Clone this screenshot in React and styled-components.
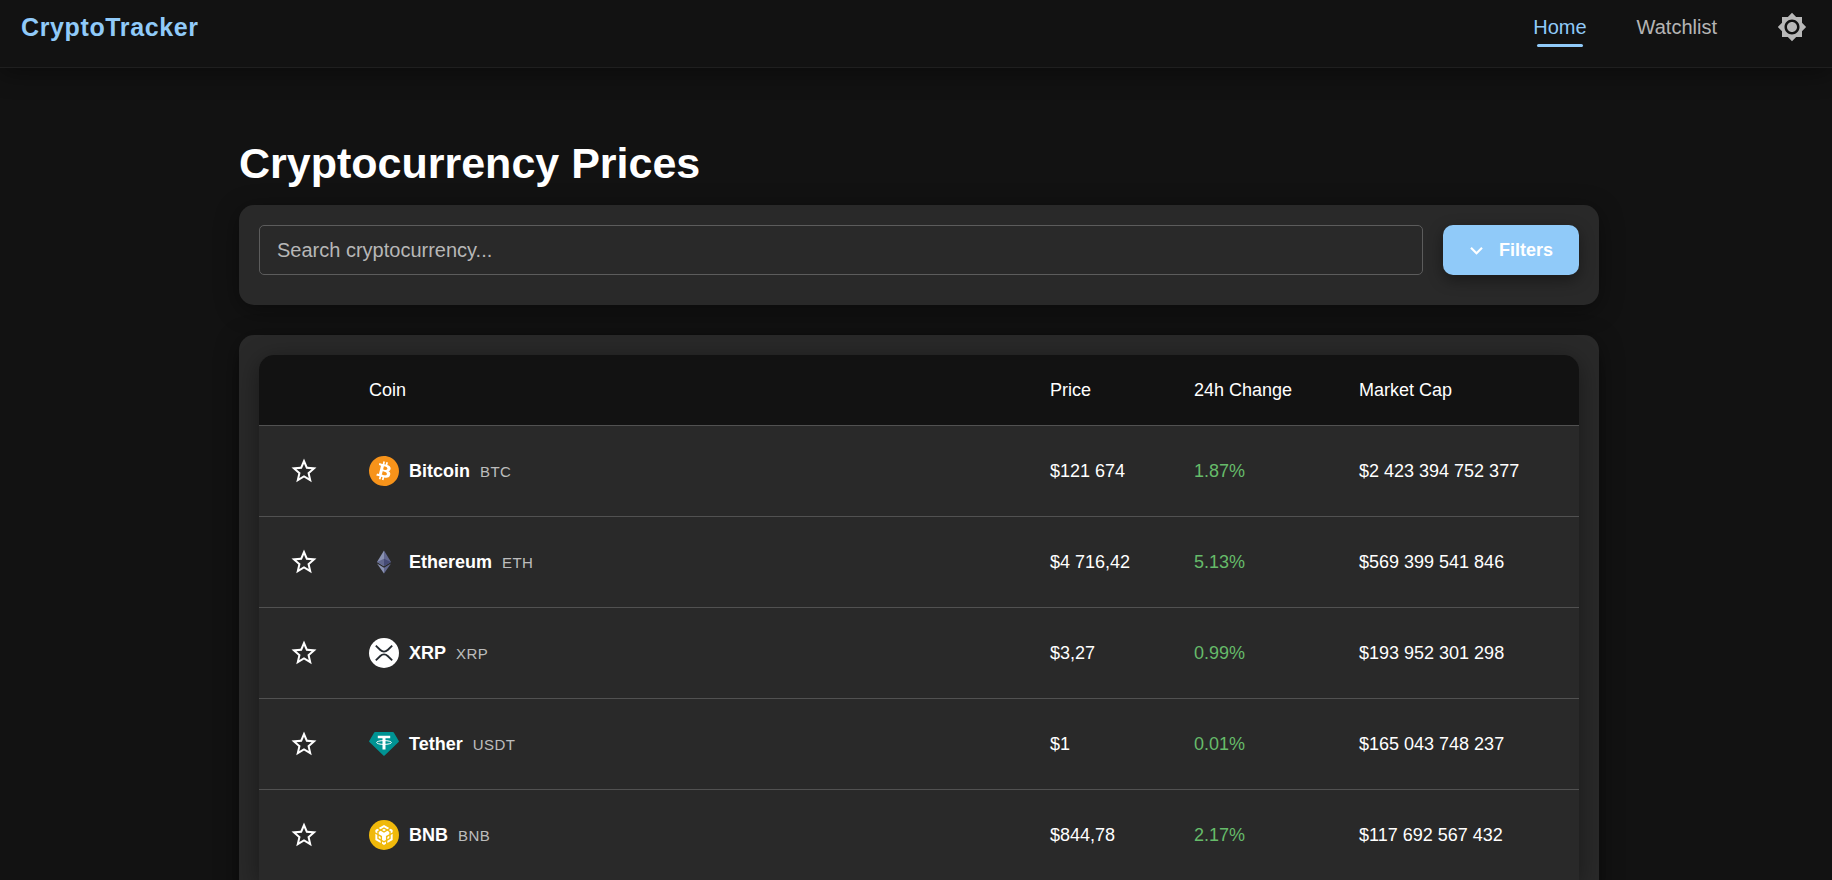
import React, { useState } from "react";
import styled, { createGlobalStyle } from "styled-components";
import { MdStarBorder, MdStar, MdBrightness7, MdExpandMore } from "react-icons/md";
import { SiBitcoin, SiBnbchain } from "react-icons/si";

const GlobalStyle = createGlobalStyle`
  *, *::before, *::after { box-sizing: border-box; }
  body {
    margin: 0;
    background: #121212;
    color: #fff;
    font-family: "Liberation Sans", Arial, sans-serif;
    font-size: 18px;
  }
  button, input { font: inherit; color: inherit; }
`;

const Header = styled.header`
  position: relative;
  display: flex;
  align-items: center;
  justify-content: space-between;
  padding: 2px 15px 15px 21px;
  border-bottom: 1px solid #1f1f1f;
  box-shadow: 0 5px 25px rgba(0, 0, 0, 0.4);
`;

const Logo = styled.a`
  color: #90caf9;
  font-size: 25px;
  font-weight: 700;
  line-height: 40px;
  letter-spacing: 0.025em;
  text-decoration: none;
`;

const Nav = styled.nav`
  display: flex;
  align-items: center;
  gap: 50px;
`;

const NavLink = styled.a`
  position: relative;
  color: ${(p) => (p.$active ? "#90caf9" : "rgba(255, 255, 255, 0.7)")};
  font-size: 20px;
  line-height: 40px;
  text-decoration: none;

  &::after {
    content: "";
    display: ${(p) => (p.$active ? "block" : "none")};
    position: absolute;
    left: 4px;
    right: 4px;
    bottom: 0;
    height: 3px;
    border-radius: 2px;
    background: #90caf9;
  }
`;

const IconButton = styled.button`
  display: inline-flex;
  padding: 10px;
  border: 0;
  border-radius: 50%;
  background: none;
  color: ${(p) => (p.$muted ? "rgba(255, 255, 255, 0.7)" : "#fff")};
  cursor: pointer;

  svg { width: 30px; height: 30px; }
`;

const Main = styled.main`
  max-width: 1366px;
  margin: 0 auto;
  padding: 68px 0 30px 6px;
`;

const Title = styled.h1`
  margin: 0 0 15px;
  font-size: 43px;
  line-height: 54px;
  font-weight: 700;
`;

const Panel = styled.section`
  margin-bottom: 30px;
  padding: 20px 20px 30px;
  border-radius: 15px;
  background: #292929;
  box-shadow: 0 5px 25px rgba(0, 0, 0, 0.4);
`;

const SearchRow = styled.form`
  display: flex;
  gap: 20px;
`;

const SearchInput = styled.input`
  flex: 1;
  min-width: 0;
  height: 50px;
  padding: 0 17px;
  border: 1px solid #5c5c5c;
  border-radius: 5px;
  outline: 0;
  background: transparent;
  font-size: 20px;

  &::placeholder { color: #b7b7b7; opacity: 1; }
  &:focus { border-color: #90caf9; }
`;

const FilterButton = styled.button`
  display: flex;
  align-items: center;
  justify-content: center;
  gap: 10px;
  width: 136px;
  height: 50px;
  padding: 0 5px 0 0;
  border: 0;
  border-radius: 10px;
  background: #90caf9;
  color: #fff;
  font-weight: 700;
  box-shadow: 0 5px 15px rgba(0, 0, 0, 0.4);
  cursor: pointer;

  svg { width: 25px; height: 25px; }
`;

const TableFrame = styled.div`
  overflow: hidden;
  border-radius: 15px 15px 0 0;
  box-shadow: 0 5px 25px rgba(0, 0, 0, 0.4);
`;

const CoinTable = styled.table`
  width: 100%;
  border-collapse: separate;
  border-spacing: 0;
  table-layout: fixed;
  background: #292929;
`;

const Column = styled.col`
  width: ${(p) => p.$width || "auto"};
`;

const HeadCell = styled.th`
  height: 71px;
  padding: 0 20px;
  border-bottom: 1px solid #515151;
  background: #121212;
  font-weight: 400;
  text-align: left;
`;

const Cell = styled.td`
  height: 91px;
  padding: 0 20px;
  border-bottom: 1px solid #515151;
  color: ${(p) => (p.$gain ? "#66bb6a" : "#fff")};
`;

const CoinLabel = styled.div`
  display: flex;
  align-items: center;
  gap: 10px;

  > svg { flex: none; width: 30px; height: 30px; }
`;

const CoinName = styled.strong`
  font-size: 18px;
`;

const CoinSymbol = styled.span`
  color: rgba(255, 255, 255, 0.7);
  font-size: 15px;
  letter-spacing: 0.03em;
`;

const BitcoinIcon = () => (
  <svg viewBox="0 0 30 30" aria-hidden="true">
    <circle cx="15" cy="15" r="14" fill="#fff" />
    <SiBitcoin size={30} color="#f7931a" />
  </svg>
);

const EthereumIcon = () => (
  <svg viewBox="0 0 30 30" aria-hidden="true">
    <path d="M15 3.5 8 15l7 4.200z" fill="#8a92b2" />
    <path d="M15 3.5 22 15l-7 4.200z" fill="#62688f" />
    <path d="M15 11.800 8 15l7 4.200z" fill="#62688f" />
    <path d="M15 11.800 22 15l-7 4.200z" fill="#454a75" />
    <path d="M8 16.600 15 26.500v-5.800z" fill="#8a92b2" />
    <path d="M22 16.600 15 26.500v-5.800z" fill="#62688f" />
  </svg>
);

const XrpIcon = () => (
  <svg viewBox="0 0 30 30" aria-hidden="true">
    <circle cx="15" cy="15" r="15" fill="#fff" />
    <g fill="none" stroke="#23292f" strokeWidth="1.8">
      <path d="M6.800 7.600 11.300 12a5.300 5.300 0 0 0 7.400 0l4.500-4.400" />
      <path d="M6.800 22.400 11.300 18a5.300 5.300 0 0 1 7.400 0l4.500 4.400" />
    </g>
  </svg>
);

const TetherIcon = () => (
  <svg viewBox="0 0 30 30" aria-hidden="true">
    <path d="M6.300 3h17.400c.5 0 .9.200 1.100.6l5 8.300c.2.400.2.900-.2 1.200L15.600 26.600c-.4.300-.8.300-1.200 0L.4 13.100c-.4-.3-.4-.8-.2-1.200l5-8.300c.2-.4.600-.6 1.100-.6z" fill="#009393" />
    <path d="M8.800 6.800h12.400v2.400H8.800zM13.500 9h3v11.400h-3z" fill="#fff" />
    <ellipse cx="15" cy="13.500" rx="7.400" ry="1.900" fill="none" stroke="#fff" strokeWidth="1" />
  </svg>
);

const BnbIcon = () => (
  <svg viewBox="0 0 30 30" aria-hidden="true">
    <circle cx="15" cy="15" r="15" fill="#f0b90b" />
    <g transform="translate(5 5)">
      <SiBnbchain size={20} color="#fff" />
    </g>
  </svg>
);

const coins = [
  { name: "Bitcoin", symbol: "BTC", Icon: BitcoinIcon, price: "$121 674", change: "1.87%", cap: "$2 423 394 752 377" },
  { name: "Ethereum", symbol: "ETH", Icon: EthereumIcon, price: "$4 716,42", change: "5.13%", cap: "$569 399 541 846" },
  { name: "XRP", symbol: "XRP", Icon: XrpIcon, price: "$3,27", change: "0.99%", cap: "$193 952 301 298" },
  { name: "Tether", symbol: "USDT", Icon: TetherIcon, price: "$1", change: "0.01%", cap: "$165 043 748 237" },
  { name: "BNB", symbol: "BNB", Icon: BnbIcon, price: "$844,78", change: "2.17%", cap: "$117 692 567 432" },
];

export default function App() {
  const [starred, setStarred] = useState({});
  const toggle = (symbol) => setStarred((s) => ({ ...s, [symbol]: !s[symbol] }));

  return (
    <>
      <GlobalStyle />
      <Header>
        <Logo href="#">CryptoTracker</Logo>
        <Nav>
          <NavLink href="#" $active aria-current="page">Home</NavLink>
          <NavLink href="#watchlist">Watchlist</NavLink>
          <IconButton type="button" $muted aria-label="Toggle theme">
            <MdBrightness7 />
          </IconButton>
        </Nav>
      </Header>
      <Main>
        <Title>Cryptocurrency Prices</Title>
        <Panel>
          <SearchRow role="search" onSubmit={(e) => e.preventDefault()}>
            <SearchInput type="text" aria-label="Search cryptocurrency" placeholder="Search cryptocurrency..." />
            <FilterButton type="button">
              <MdExpandMore />
              Filters
            </FilterButton>
          </SearchRow>
        </Panel>
        <Panel>
          <TableFrame>
            <CoinTable>
              <colgroup>
                <Column $width="90px" />
                <Column />
                <Column $width="144px" />
                <Column $width="165px" />
                <Column $width="240px" />
              </colgroup>
              <thead>
                <tr>
                  <HeadCell aria-label="Watch" />
                  <HeadCell scope="col">Coin</HeadCell>
                  <HeadCell scope="col">Price</HeadCell>
                  <HeadCell scope="col">24h Change</HeadCell>
                  <HeadCell scope="col">Market Cap</HeadCell>
                </tr>
              </thead>
              <tbody>
                {coins.map(({ name, symbol, Icon, price, change, cap }) => (
                  <tr key={symbol}>
                    <Cell>
                      <IconButton
                        type="button"
                        aria-label={`Watch ${name}`}
                        aria-pressed={!!starred[symbol]}
                        onClick={() => toggle(symbol)}
                      >
                        {starred[symbol] ? <MdStar /> : <MdStarBorder />}
                      </IconButton>
                    </Cell>
                    <Cell>
                      <CoinLabel>
                        <Icon />
                        <CoinName>{name}</CoinName>
                        <CoinSymbol>{symbol}</CoinSymbol>
                      </CoinLabel>
                    </Cell>
                    <Cell>{price}</Cell>
                    <Cell $gain>{change}</Cell>
                    <Cell>{cap}</Cell>
                  </tr>
                ))}
              </tbody>
            </CoinTable>
          </TableFrame>
        </Panel>
      </Main>
    </>
  );
}
